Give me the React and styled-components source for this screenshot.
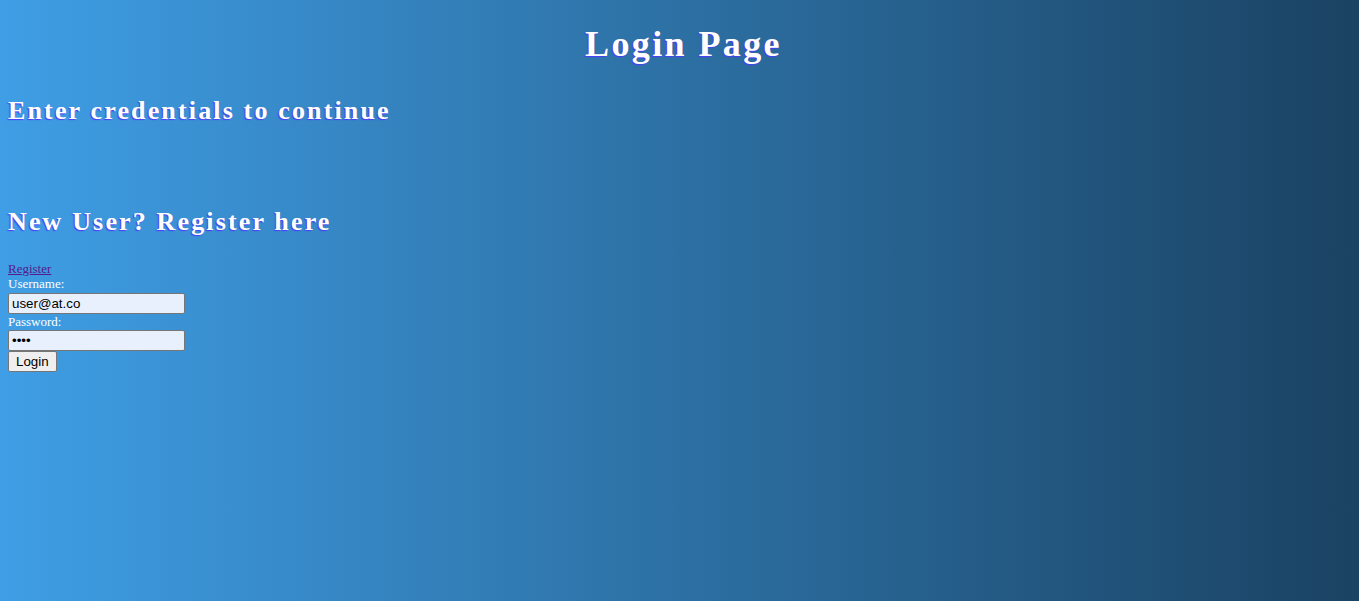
import React from "react";
import styled, { createGlobalStyle } from "styled-components";

const Global = createGlobalStyle`
  html, body { height: 100%; }
  body {
    margin: 0;
    min-height: 601px;
    font-family: "Liberation Serif", "Times New Roman", serif;
    background: linear-gradient(to right, #3f9ee5, #1a4262);
    color: #fff;
  }
`;

const Page = styled.div`
  padding: 24px 8px 0;
`;

const Title = styled.h1`
  margin: 0 0 32px;
  padding-left: 8px;
  text-align: center;
  font-size: 36px;
  font-weight: bold;
  letter-spacing: 2.4px;
  line-height: 40px;
  text-shadow: -1px 1px 1px #4b3bff;
`;

const Heading = styled.h2`
  margin: 0 0 ${(p) => p.$gap || 0}px;
  font-size: 26px;
  font-weight: bold;
  letter-spacing: 2.15px;
  line-height: 29px;
  text-shadow: -1px 1px 1px #4b3bff;
`;

const Form = styled.form`
  display: flex;
  flex-direction: column;
  align-items: flex-start;
  font-size: 13px;
`;

const Link = styled.a`
  color: #551a8b;
  font-size: 13px;
  line-height: 15px;
`;

const Label = styled.label`
  display: block;
  line-height: 15px;
  margin-bottom: ${(p) => p.$gap}px;
`;

const Input = styled.input`
  box-sizing: border-box;
  width: 177px;
  height: 21px;
  margin: 0;
  padding: 1px 3px;
  border: 1px solid #767676;
  border-radius: 2px;
  background: #e8f0fe;
  color: #000;
  font-family: "Liberation Sans", Arial, sans-serif;
  font-size: 13.33px;
`;

const Button = styled.button`
  box-sizing: border-box;
  height: 21px;
  padding: 1px 7px;
  margin: 0;
  border: 1px solid #767676;
  border-radius: 2px;
  background: #efefef;
  color: #000;
  font-family: "Liberation Sans", Arial, sans-serif;
  font-size: 13.33px;
`;

export default function App() {
  return (
    <Page>
      <Global />
      <Title>Login Page</Title>
      <Heading $gap={82}>Enter credentials to continue</Heading>
      <Heading $gap={25}>New User? Register here</Heading>
      <Form onSubmit={(e) => e.preventDefault()}>
        <Link href="#register">Register</Link>
        <Label htmlFor="u" $gap={2}>Username:</Label>
        <Input id="u" type="text" defaultValue="user@at.co" />
        <Label htmlFor="p" $gap={1}>Password:</Label>
        <Input id="p" type="password" defaultValue="1234" />
        <Button type="submit">Login</Button>
      </Form>
    </Page>
  );
}
